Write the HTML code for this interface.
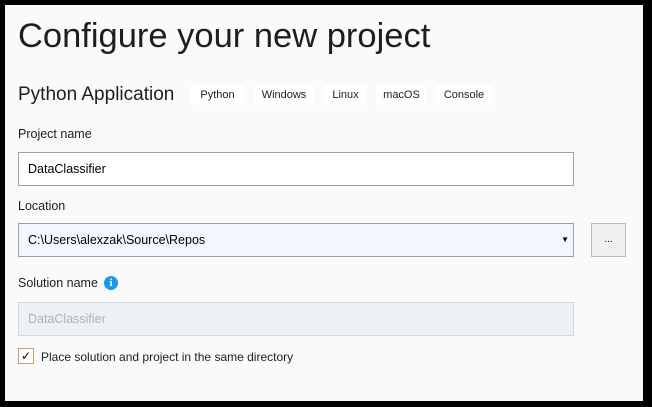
<!DOCTYPE html><html><head><style>
body{margin:0;width:652px;height:407px;background:#000;font-family:"Liberation Sans",sans-serif;overflow:hidden;position:relative}
.p{position:absolute;left:5px;top:5px;width:638px;height:396px;background:#fafafa}
.a{position:absolute;white-space:nowrap;color:#1e1e1e}
.tag{position:absolute;top:85px;height:20px;background:#fff;border-radius:3px;font-size:11px;line-height:20px;text-align:center;color:#1e1e1e}
.in{position:absolute;left:18px;width:556px;height:34px;border:1px solid #a0a0a0;box-sizing:border-box;font-size:12.5px;line-height:32px;padding-left:9px}
</style></head><body><div class="p"></div>
<div class="a" style="left:18px;top:17px;font-size:34.5px;color:#1e1e1e">Configure your new project</div>
<div class="a" style="left:18px;top:84px;font-size:19px">Python Application</div>
<div class="tag" style="left:191px;width:53px">Python</div>
<div class="tag" style="left:253px;width:62px">Windows</div>
<div class="tag" style="left:324px;width:43px">Linux</div>
<div class="tag" style="left:376px;width:51px">macOS</div>
<div class="tag" style="left:436px;width:56px">Console</div>
<div class="a" style="left:18px;top:127px;font-size:12.5px">Project name</div>
<div class="in" style="top:152px;background:#fff">DataClassifier</div>
<div class="a" style="left:18px;top:199px;font-size:12.5px">Location</div>
<div class="in" style="top:223px;background:#f2f7ff">C:\Users\alexzak\Source\Repos<span style="position:absolute;right:4px;top:0;font-size:8px">▼</span></div>
<div style="position:absolute;left:591px;top:223px;width:35px;height:34px;border:1px solid #bbb;box-sizing:border-box;background:#f0f0f0;font-size:10px;text-align:center;line-height:32px">...</div>
<div class="a" style="left:18px;top:276px;font-size:12.5px">Solution name</div>
<div style="position:absolute;left:104px;top:276px;width:14px;height:14px;border-radius:50%;background:#1c97ea;color:#fff;font:bold 11px/14px 'Liberation Serif',serif;text-align:center">i</div>
<div class="in" style="top:302px;background:#edf0f5;border-color:#d4d8de;color:#b0b4ba">DataClassifier</div>
<div style="position:absolute;left:18px;top:348px;width:16px;height:16px;border:1px solid #c8a070;box-sizing:border-box;background:#fff;font-size:12px;line-height:14px;text-align:center">✓</div>
<div class="a" style="left:41px;top:350px;font-size:12px">Place solution and project in the same directory</div>
</body></html>
